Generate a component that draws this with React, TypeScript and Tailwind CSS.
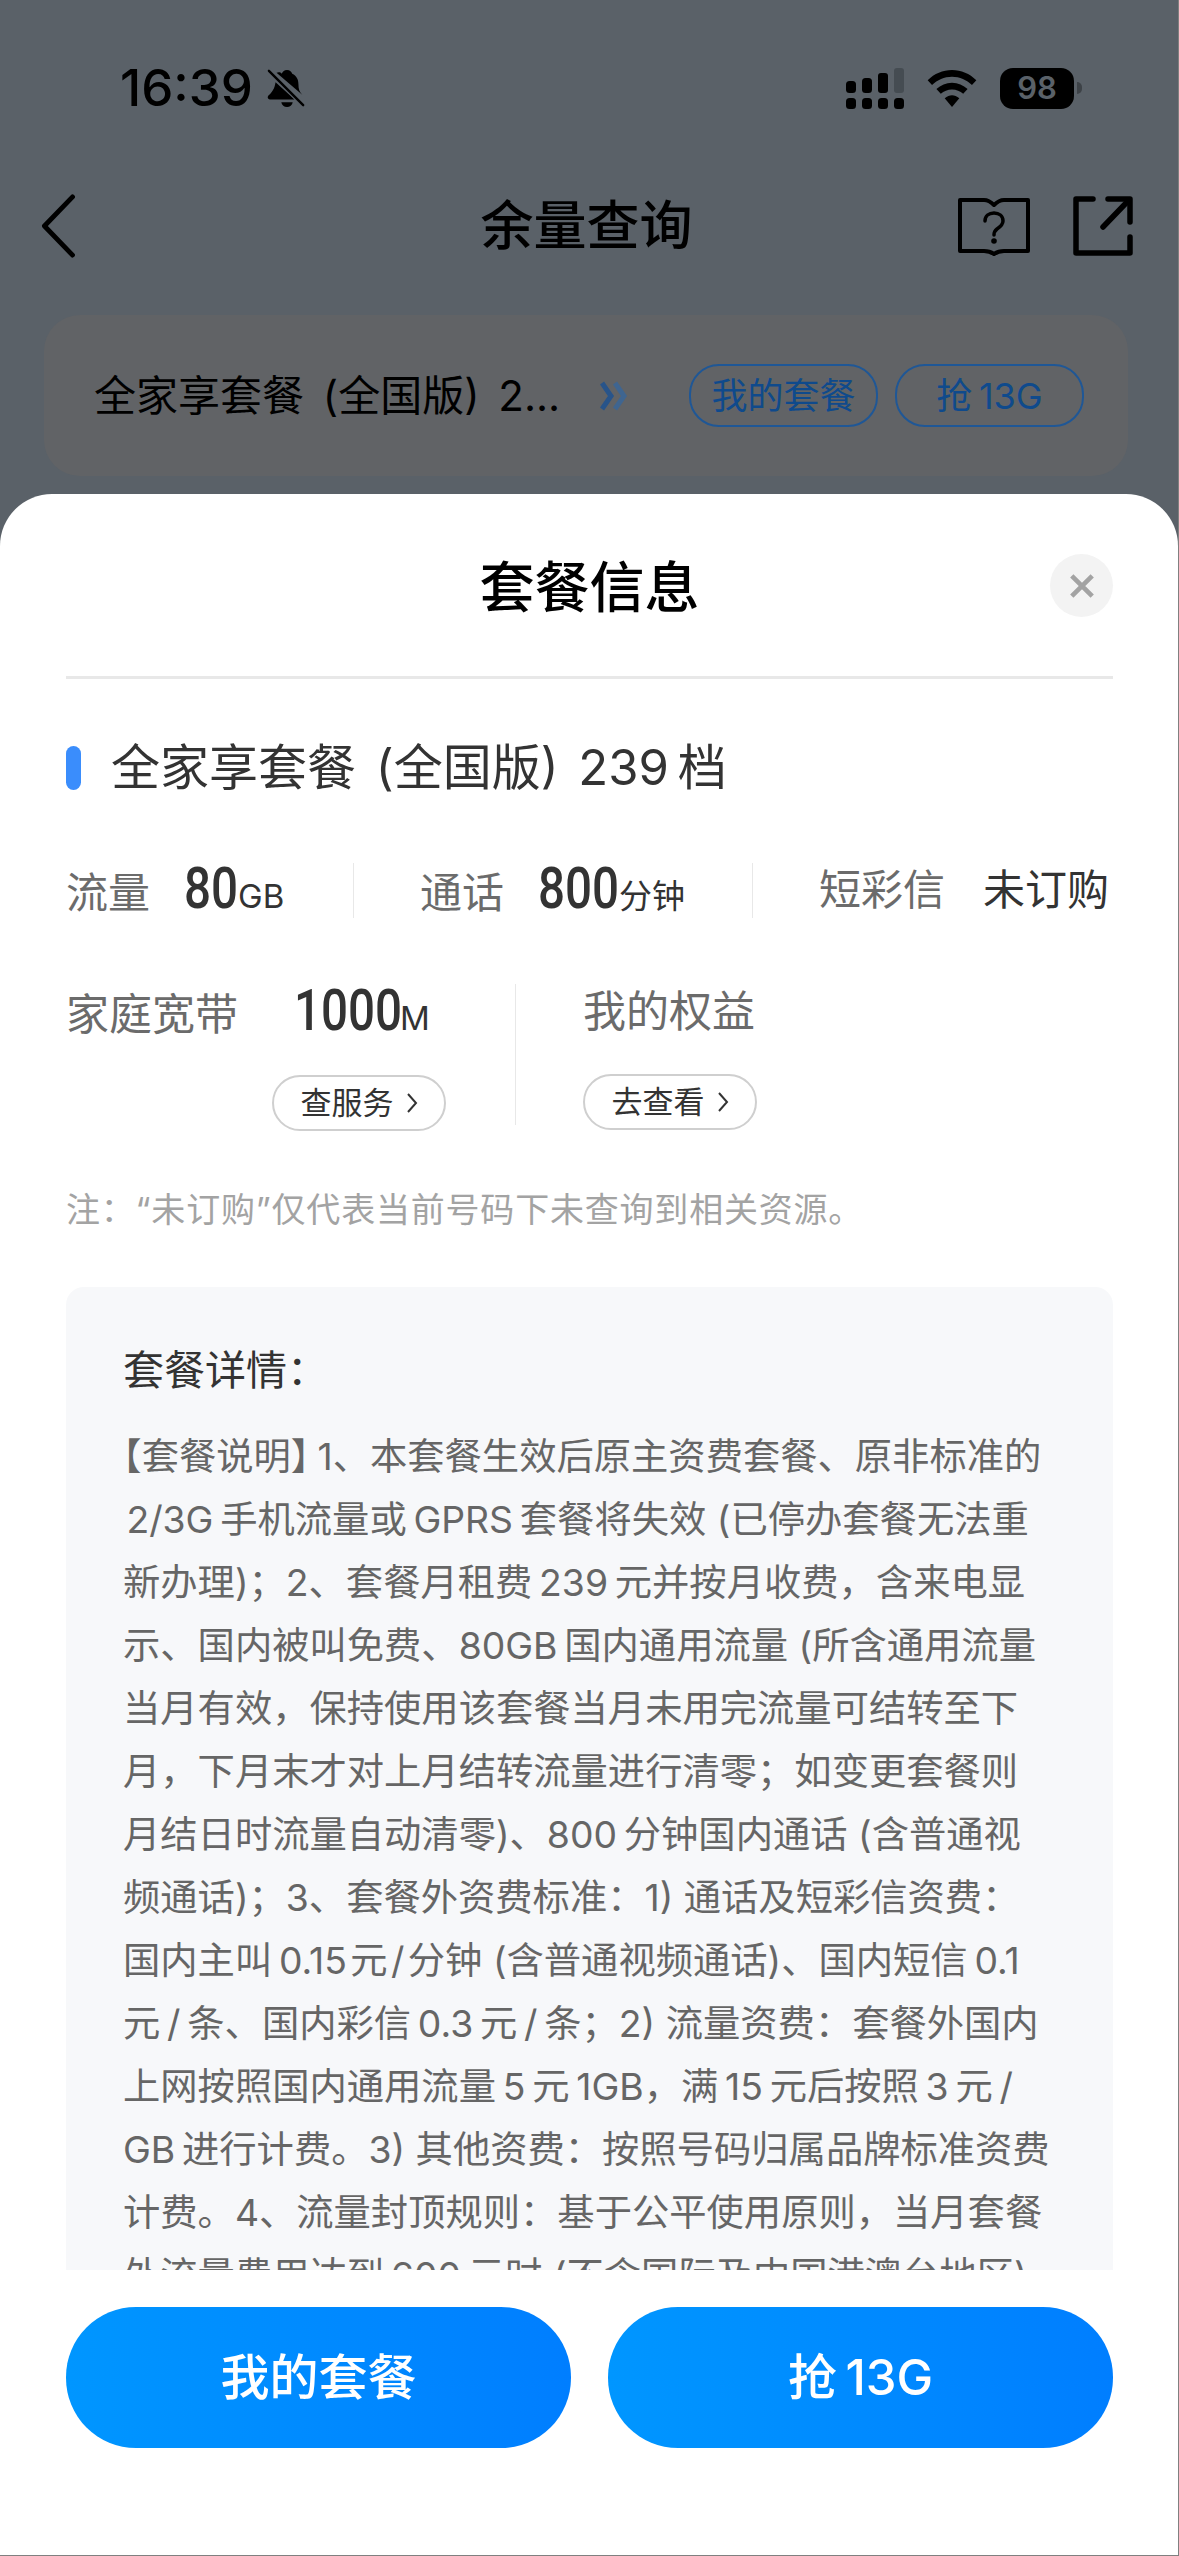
import React from "react";

const cjk = "font-['Inter','Noto_Sans_CJK_SC',sans-serif]";

function CellSignal() {
  return (
    <svg width="58" height="41" viewBox="0 0 58 41" className="block">
      <rect x="0" y="13" width="10" height="12" rx="3.5" fill="#000" />
      <rect x="16" y="10" width="10" height="15" rx="3.5" fill="#000" />
      <rect x="32" y="5" width="10" height="20" rx="3" fill="#000" />
      <rect x="48" y="0" width="10" height="25" rx="3" fill="#454c52" />
      <rect x="0" y="30" width="10" height="11" rx="3.5" fill="#000" />
      <rect x="16" y="30" width="10" height="11" rx="3.5" fill="#000" />
      <rect x="32" y="30" width="10" height="11" rx="3.5" fill="#000" />
      <rect x="48" y="30" width="10" height="11" rx="3.5" fill="#000" />
    </svg>
  );
}

function Wifi() {
  return (
    <svg width="50" height="37" viewBox="0 0 50 38" className="block">
      <path d="M25 0C15.500 0 7 3.800 0 10.500L4.500 15.500C10 10.200 17 7 25 7C33 7 40 10.200 45.500 15.500L50 10.500C43 3.800 34.500 0 25 0Z" fill="#000" />
      <path d="M25 13C18.800 13 13.500 15.400 9 19.500L13.500 24.500C16.600 21.700 20.500 20 25 20C29.500 20 33.400 21.700 36.500 24.500L41 19.500C36.500 15.400 31.200 13 25 13Z" fill="#000" />
      <path d="M25 26C22.500 26 20 27 17.500 29L25 38L32.500 29C30 27 27.500 26 25 26Z" fill="#000" />
    </svg>
  );
}

function MutedBell() {
  return (
    <svg width="40" height="42" viewBox="0 0 42 42" className="block">
      <path d="M21 2C24 2 26 4 26.500 6C31 8 33 12 33 17C33 22 34 25 37 28L10 5C12 4 14 4 15.500 6C16 4 18 2 21 2Z" fill="#000" />
      <path d="M9 15L29 33H3C1 33 0 31 1.500 29C5 26 8 22 9 15Z" fill="#000" />
      <path d="M15 36H27C26.500 39 24 41 21 41C18 41 15.500 39 15 36Z" fill="#000" />
      <path d="M2 2L39 40" stroke="#5a6168" strokeWidth="5" />
      <path d="M2 3L38 39" stroke="#000" strokeWidth="2.500" strokeLinecap="round" />
    </svg>
  );
}

function HelpBook() {
  return (
    <svg width="72" height="59" viewBox="0 0 72 59" fill="none" className="block">
      <path d="M2 3H26C30 3 33 5 36 8C39 5 42 3 46 3H70V54H46C42 54 39 55 36 57C33 55 30 54 26 54H2V3Z" stroke="#000" strokeWidth="4" strokeLinejoin="round" />
      <path d="M27 24C27 19 31 16 36 16C41 16 45 19 45 24C45 28 42 30 39 32C37 33.500 36 35 36 38" stroke="#000" strokeWidth="3.500" strokeLinecap="round" />
      <circle cx="36" cy="44" r="2.800" fill="#000" />
    </svg>
  );
}

function ShareOut() {
  return (
    <svg width="60" height="60" viewBox="0 0 60 60" fill="none" className="block">
      <path d="M20 3H3V57H57V41" stroke="#000" strokeWidth="5.500" strokeLinecap="round" strokeLinejoin="round" />
      <path d="M35 3H57V26" stroke="#000" strokeWidth="5.500" strokeLinecap="round" strokeLinejoin="round" />
      <path d="M55 5L30 31" stroke="#000" strokeWidth="5.500" strokeLinecap="round" />
    </svg>
  );
}

function StatusBar() {
  return (
    <div className="flex h-[109px] shrink-0 items-end justify-between pl-[120px] pr-[96px]">
      <div className="flex h-[42px] items-center gap-[14px]">
        <span className={`${cjk} text-[51px] leading-[42px] font-medium text-black`}>16:39</span>
        <MutedBell />
      </div>
      <div className="flex h-[42px] items-center gap-[23px]">
        <CellSignal />
        <Wifi />
        <div className="flex items-center gap-[3px]">
          <div className={`${cjk} flex h-[41px] w-[74px] items-center justify-center rounded-[13px] bg-black text-[31px] font-semibold text-[#5a6168]`}>
            98
          </div>
          <div className="h-[12px] w-[5px] rounded-r-full bg-[#3d4247]" />
        </div>
      </div>
    </div>
  );
}

function NavBar() {
  return (
    <div className="mt-[85px] flex h-[64px] shrink-0 items-center pl-[40px] pr-[45px]">
      <div className="flex-1">
        <svg width="36" height="64" viewBox="0 0 36 66" fill="none" className="block">
          <path d="M33 3L4 33L33 63" stroke="#000" strokeWidth="5" strokeLinecap="round" strokeLinejoin="round" />
        </svg>
      </div>
      <span className={`${cjk} pt-[2px] text-[53px] font-medium text-black`}>余量查询</span>
      <div className="flex flex-1 items-center justify-end gap-[43px]">
        <HelpBook />
        <ShareOut />
      </div>
    </div>
  );
}

function PlanBar() {
  return (
    <div className="ml-[44px] mr-[50px] mt-[57px] flex h-[161px] shrink-0 items-center rounded-[36px] bg-[#616366] pl-[50px] pr-[44px]">
      <span className={`${cjk} w-[506px] whitespace-nowrap text-[42px] text-black [word-spacing:7px]`}>全家享套餐 (全国版) 2...</span>
      <svg width="28" height="30" viewBox="0 0 28 30" fill="none" className="block">
        <path d="M2 2L11 15L2 28" stroke="#28548a" strokeWidth="5" />
        <path d="M15 2L24 15L15 28" stroke="#3f6590" strokeWidth="5" />
      </svg>
      <div className="ml-auto flex items-center gap-[17px]">
        <span className={`${cjk} flex h-[63px] w-[189px] items-center justify-center rounded-[30px] border-2 border-[#1f5796] text-[36px] text-[#0f4a8c]`}>
          我的套餐
        </span>
        <span className={`${cjk} flex h-[63px] w-[189px] items-center justify-center rounded-[30px] border-2 border-[#1f5796] text-[36px] text-[#0f4a8c]`}>
          抢{"\u2009"}13G
        </span>
      </div>
    </div>
  );
}

function BigNumber({ value, width }: { value: string; width: string }) {
  return (
    <span className={`inline-block origin-left scale-x-[0.82] whitespace-nowrap font-['Roboto',sans-serif] text-[58px] leading-none font-medium text-[#333] ${width}`}>
      {value}
    </span>
  );
}

function OutlineLink({ text }: { text: string }) {
  return (
    <span className="flex h-[56px] w-[174px] items-center justify-center gap-[12px] rounded-[28px] border-2 border-[#cfcfcf] text-[31px] text-[#333]">
      {text}
      <svg width="12" height="24" viewBox="0 0 12 24" fill="none" className="block">
        <path d="M2 3L10 12L2 21" stroke="#333" strokeWidth="2" />
      </svg>
    </span>
  );
}

const detailLines = [
  "1、本套餐生效后原主资费套餐、原非标准的",
  "\u200a2/3G\u2009手机流量或\u2009GPRS\u2009套餐将失效 (已停办套餐无法重",
  "新办理)；2、套餐月租费\u2009239\u2009元并按月收费，含来电显",
  "示、国内被叫免费、80GB\u2009国内通用流量 (所含通用流量",
  "当月有效，保持使用该套餐当月未用完流量可结转至下",
  "月，下月末才对上月结转流量进行清零；如变更套餐则",
  "月结日时流量自动清零)、800\u2009分钟国内通话 (含普通视",
  "频通话)；3、套餐外资费标准：1) 通话及短彩信资费：",
  "国内主叫\u20090.15\u200a元\u200a/\u200a分钟 (含普通视频通话)、国内短信\u20090.1",
  "元\u2009/\u2009条、国内彩信\u20090.3\u2009元\u2009/\u2009条；2) 流量资费：套餐外国内",
  "上网按照国内通用流量\u20095\u2009元\u20091GB，满\u200915\u2009元后按照\u20093\u2009元\u2009/",
  "GB\u2009进行计费。3) 其他资费：按照号码归属品牌标准资费",
  "计费。4、流量封顶规则：基于公平使用原则，当月套餐",
  "外流量费用达到\u2009600\u2009元时 (不含国际及中国港澳台地区)",
];

function Sheet() {
  return (
    <div className={`${cjk} mt-[18px] flex min-h-0 flex-1 flex-col rounded-t-[52px] bg-white`}>
      <div className="relative ml-[66px] mr-[65px] flex h-[185px] shrink-0 items-center justify-center border-b-[3px] border-[#e8e8e8] pt-[4px]">
        <span className="text-[55px] font-medium text-black">套餐信息</span>
        <div className="absolute right-0 top-[60px] flex h-[63px] w-[63px] items-center justify-center rounded-full bg-[#f3f3f3]">
          <svg width="26" height="26" viewBox="0 0 28 28" fill="none" className="block">
            <path d="M3 3L25 25M25 3L3 25" stroke="#a3a3a3" strokeWidth="5" />
          </svg>
        </div>
      </div>

      <div className="ml-[66px] mr-[65px] mt-[65px] flex h-[48px] shrink-0 items-center gap-[30px]">
        <div className="h-[44px] w-[15px] rounded-full bg-[#3a8dfc]" />
        <span className="whitespace-nowrap text-[49px] leading-[48px] text-[#333] [word-spacing:6px]">
          全家享套餐 (全国版) 239{"\u2009"}档
        </span>
      </div>

      <div className="ml-[66px] mr-[65px] mt-[58px] flex h-[80px] shrink-0 items-center">
        <div className="flex h-[55px] w-[288px] items-center border-r border-[#e8e8e8]">
          <div className="flex items-baseline gap-[34px]">
            <span className="text-[42px] leading-[50px] text-[#6b6b6b]">流量</span>
            <span className="whitespace-nowrap text-[33px] text-[#333]">
              <BigNumber value="80" width="w-[54px]" />
              GB
            </span>
          </div>
        </div>
        <div className="flex h-[55px] w-[399px] items-center border-r border-[#e8e8e8] pl-[66px]">
          <div className="flex items-baseline gap-[34px]">
            <span className="text-[42px] leading-[50px] text-[#6b6b6b]">通话</span>
            <span className="whitespace-nowrap text-[33px] text-[#333]">
              <BigNumber value="800" width="w-[81px]" />
              分钟
            </span>
          </div>
        </div>
        <div className="flex flex-1 items-baseline gap-[38px] pl-[66px]">
          <span className="text-[42px] leading-[50px] text-[#6b6b6b]">短彩信</span>
          <span className="text-[42px] leading-[50px] text-[#333]">未订购</span>
        </div>
      </div>

      <div className="ml-[66px] mr-[65px] mt-[54px] flex h-[147px] shrink-0">
        <div className="flex w-[449px] flex-col">
          <div className="-mt-[3px] flex h-[58px] items-baseline gap-[56px]">
            <span className="text-[43px] leading-[58px] text-[#6b6b6b]">家庭宽带</span>
            <span className="whitespace-nowrap text-[33px] text-[#333]">
              <BigNumber value="1000" width="w-[106px]" />
              M
            </span>
          </div>
          <div className="mt-[36px] pl-[206px]">
            <OutlineLink text="查服务" />
          </div>
        </div>
        <div className="h-[141px] w-px bg-[#e8e8e8]" />
        <div className="flex flex-col items-start pl-[67px]">
          <span className="-mt-[2px] text-[43px] leading-[58px] text-[#6b6b6b]">我的权益</span>
          <div className="mt-[34px]">
            <OutlineLink text="去查看" />
          </div>
        </div>
      </div>

      <p className="ml-[66px] mr-[65px] mt-[54px] shrink-0 text-[34px] leading-[50px] tracking-[0.8px] text-[#a3a3a3]">
        注：“未订购”仅代表当前号码下未查询到相关资源。
      </p>

      <div className="ml-[66px] mr-[65px] mt-[52px] min-h-0 flex-1 overflow-hidden rounded-t-[18px] bg-[#f7f8fa] pl-[57px] pt-[53px]">
        <div className="text-[41px] leading-[60px] text-[#333]">套餐详情：</div>
        <div className="mt-[25px] text-[37.3px] leading-[63px] text-[#666]">
          <div className="whitespace-pre">
            <span className="[font-feature-settings:'halt']">【</span>
            套餐说明
            <span className="mr-[8px] [font-feature-settings:'halt']">】</span>
            {detailLines[0]}
          </div>
          {detailLines.slice(1).map((line) => (
            <div key={line} className="whitespace-pre">
              {line}
            </div>
          ))}
        </div>
      </div>

      <div className="ml-[66px] mr-[65px] flex shrink-0 justify-between pb-[107px] pt-[37px]">
        <div className="flex h-[141px] w-[505px] items-center justify-center rounded-[70px] bg-gradient-to-r from-[#0096ff] to-[#007eff] text-[49px] font-medium text-white">
          我的套餐
        </div>
        <div className="flex h-[141px] w-[505px] items-center justify-center rounded-[70px] bg-gradient-to-r from-[#0096ff] to-[#007eff] text-[49px] font-medium text-white">
          抢{"\u2009"}13G
        </div>
      </div>
    </div>
  );
}

export default function App() {
  return (
    <div className="flex h-[2556px] w-[1179px] flex-col overflow-hidden border-b border-r border-[#808080] bg-[#5a6168]">
      <StatusBar />
      <NavBar />
      <PlanBar />
      <Sheet />
    </div>
  );
}
